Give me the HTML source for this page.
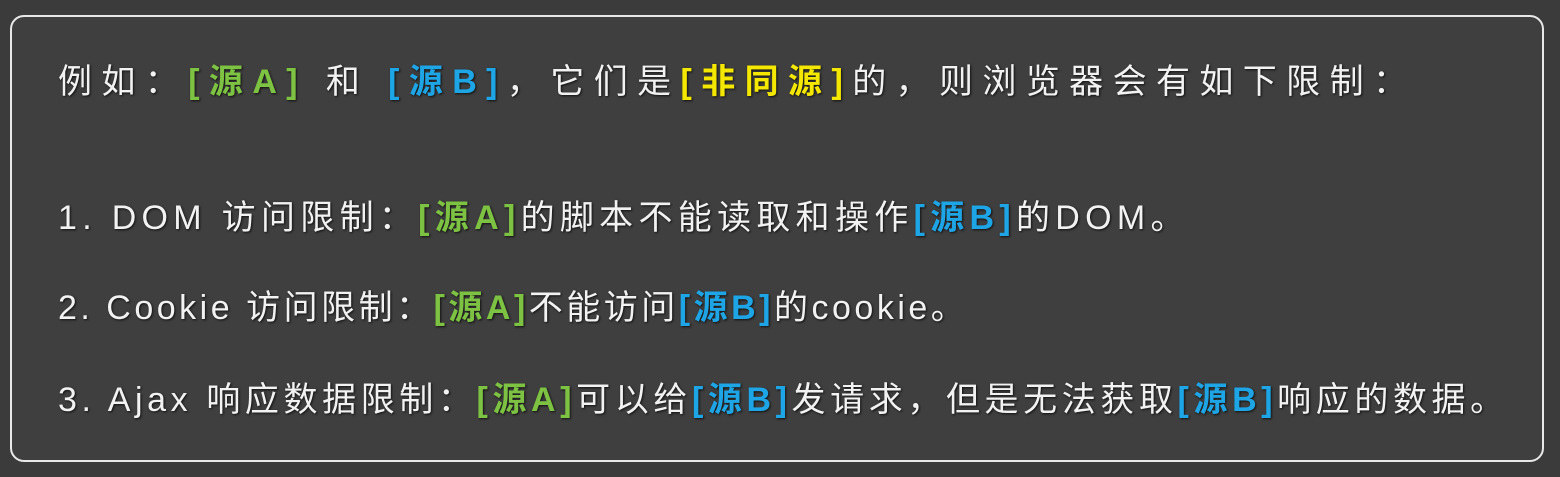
<html><head><style>
body{margin:0;width:1560px;height:477px;background:#3b3b3b;overflow:hidden;font-family:"Liberation Sans","Noto Sans CJK SC",sans-serif;color:#f2f2f2}
.box{position:absolute;left:10px;top:15px;width:1530px;height:443px;border:2px solid #e8e8e8;border-radius:14px;background:#3f3f3f}
.l{position:absolute;left:58px;font-size:34px;line-height:40px;white-space:nowrap;text-shadow:1px 1px 2px #111}
.g{color:#7dc242;font-weight:bold}.b{color:#1ea5e6;font-weight:bold}.y{color:#f5e800;font-weight:bold}
</style></head><body><div class="box"></div>
<div class="l" style="top:62px;letter-spacing:9.4px">例如：<span class="g">[源A]</span> 和 <span class="b">[源B]</span>，它们是<span class="y">[非同源]</span>的，则浏览器会有如下限制：</div>
<div class="l" style="top:198px;letter-spacing:5.3px">1. DOM 访问限制：<span class="g">[源A]</span>的脚本不能读取和操作<span class="b">[源B]</span>的DOM。</div>
<div class="l" style="top:288px;letter-spacing:3.5px">2. Cookie 访问限制：<span class="g">[源A]</span>不能访问<span class="b">[源B]</span>的cookie。</div>
<div class="l" style="top:380px;letter-spacing:4.6px">3. Ajax 响应数据限制：<span class="g">[源A]</span>可以给<span class="b">[源B]</span>发请求，但是无法获取<span class="b">[源B]</span>响应的数据。</div>
</body></html>
